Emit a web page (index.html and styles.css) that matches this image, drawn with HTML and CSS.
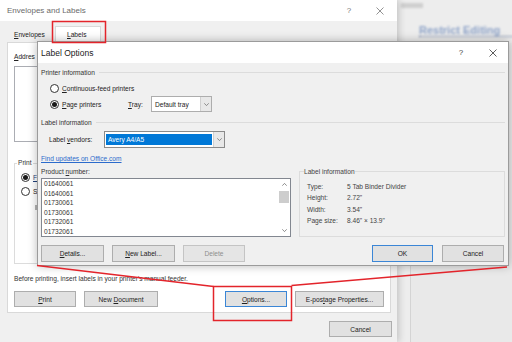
FILE: index.html
```html
<!DOCTYPE html>
<html>
<head>
<meta charset="utf-8">
<title>Envelopes and Labels</title>
<link rel="stylesheet" href="styles.css">
</head>
<body>
<div class="desk">
  <div class="outer">
    <div class="titlebar">
      <span class="title">Envelopes and Labels</span>
      <span class="tb-help">?</span>
      <span class="tb-close"><svg width="8" height="8" viewBox="0 0 8 8"><path d="M0.5 0.5L7.5 7.5M7.5 0.5L0.5 7.5" stroke="#777" stroke-width="0.8" fill="none"/></svg></span>
    </div>
    <div class="outer-body">
      <div class="tabs">
        <div class="tab"><u>E</u>nvelopes</div>
        <div class="tab active"><u>L</u>abels</div>
      </div>
      <div class="tabpage">
        <div class="addr-label"><u>A</u>ddres</div>
        <div class="addr-box"></div>
        <fieldset class="print-group">
          <legend>Print</legend>
          <div class="prow"><span class="radio on"></span><span class="opt-blue"><u>F</u></span></div>
          <div class="prow"><span class="radio"></span><span>S</span></div>
          <div class="prow dimrow"><span class="dim-mark"></span></div>
        </fieldset>
        <div class="note">Before printing, insert labels in your printer's manual feeder.</div>
        <div class="btnrow">
          <button class="btn w-print"><span><u>P</u>rint</span></button>
          <button class="btn w-newdoc"><span>New <u>D</u>ocument</span></button>
          <button class="btn default w-options"><span><u>O</u>ptions...</span></button>
          <button class="btn w-epost"><span>E-pos<u>t</u>age Properties...</span></button>
        </div>
      </div>
      <div class="outer-foot"><button class="btn w-cancel"><span>Cancel</span></button></div>
    </div>
  </div>

  <div class="bgapp">
    <div class="blob"></div>
    <div class="restrict">Restrict Editing</div>
    <div class="pane"></div>
  </div>

  <div class="lo">
    <div class="titlebar">
      <span class="title">Label Options</span>
      <span class="tb-help">?</span>
      <span class="tb-close"><svg width="8" height="8" viewBox="0 0 8 8"><path d="M0.5 0.5L7.5 7.5M7.5 0.5L0.5 7.5" stroke="#333" stroke-width="0.8" fill="none"/></svg></span>
    </div>
    <div class="lo-body">
      <div class="sec first">Printer information</div>
      <div class="r1"><span class="radio"></span><span><u>C</u>ontinuous-feed printers</span></div>
      <div class="r2">
        <span class="radio on"></span>
        <span class="pp"><u>P</u>age printers</span>
        <span class="tray-l"><u>T</u>ray:</span>
        <div class="combo tray">
          <div class="val">Default tray</div>
          <div class="dd"><svg width="5" height="3" viewBox="0 0 5 3"><path d="M0.3 0.3L2.5 2.6L4.7 0.3" stroke="#666" stroke-width="0.7" fill="none"/></svg></div>
        </div>
      </div>
      <div class="sec second">Label information</div>
      <div class="vrow">
        <span class="vl">Label <u>v</u>endors:</span>
        <div class="combo vendor">
          <div class="val sel">Avery A4/A5</div>
          <div class="dd"><svg width="5" height="3" viewBox="0 0 5 3"><path d="M0.3 0.3L2.5 2.6L4.7 0.3" stroke="#666" stroke-width="0.7" fill="none"/></svg></div>
        </div>
      </div>
      <div class="link">Find updates on Office.com</div>
      <div class="lower">
        <div class="leftcol">
          <div class="pn-label">Product <u>n</u>umber:</div>
          <div class="list">
            <div class="items">
              <div>01640061</div>
              <div>01640061</div>
              <div>01730061</div>
              <div>01730061</div>
              <div>01732061</div>
              <div>01732061</div>
            </div>
            <div class="sb">
              <div class="sb-btn"><svg width="5" height="3" viewBox="0 0 5 3"><path d="M0.3 2.7L2.5 0.4L4.7 2.7" stroke="#606060" stroke-width="0.7" fill="none"/></svg></div>
              <div class="thumb"></div>
              <div class="sb-space"></div>
              <div class="sb-btn"><svg width="5" height="3" viewBox="0 0 5 3"><path d="M0.3 0.3L2.5 2.6L4.7 0.3" stroke="#606060" stroke-width="0.7" fill="none"/></svg></div>
            </div>
          </div>
        </div>
        <fieldset class="info">
          <legend>Label information</legend>
          <div class="info-grid">
            <span>Type:</span><span>5 Tab Binder Divider</span>
            <span>Height:</span><span>2.72"</span>
            <span>Width:</span><span>3.54"</span>
            <span>Page size:</span><span>8.46" × 13.9"</span>
          </div>
        </fieldset>
      </div>
      <div class="lo-btns">
        <button class="btn w-details"><span><u>D</u>etails...</span></button>
        <button class="btn w-newlabel"><span><u>N</u>ew Label...</span></button>
        <button class="btn w-delete" disabled><span>Delete</span></button>
        <button class="btn default w-ok"><span>OK</span></button>
        <button class="btn w-locancel"><span>Cancel</span></button>
      </div>
    </div>
  </div>

  <svg class="annot" width="512" height="342" viewBox="0 0 512 342">
    <g fill="none" stroke="#e3242b" stroke-width="1.5">
      <rect x="52.5" y="21.5" width="53" height="21"/>
      <rect x="213.5" y="286.5" width="78" height="34"/>
      <line x1="37" y1="265.5" x2="213.5" y2="286.5"/>
      <line x1="291.5" y1="285.5" x2="507" y2="267"/>
    </g>
  </svg>
</div>
</body>
</html>
```

FILE: styles.css
```css
* { box-sizing: border-box; margin: 0; padding: 0; }
html, body { width: 512px; height: 342px; overflow: hidden; }
body {
  font-family: "Liberation Sans", Arial, sans-serif;
  font-size: 6.6px;
  color: #222;
  background: #eeeeee;
}
u { text-decoration: underline; text-underline-offset: 1px; }

.desk { position: relative; width: 512px; height: 342px; display: flex; overflow: hidden; }

/* ---------- shared ---------- */
.titlebar { display: flex; align-items: center; background: #fff; height: 21px; flex: none; }
.title { flex: 1; font-size: 8px; color: #6a6a6a; white-space: nowrap; }
.tb-help { width: 10px; text-align: center; font-size: 8px; color: #777; }
.tb-close { width: 10px; height: 10px; display: flex; align-items: center; justify-content: center; }

.btn {
  display: flex; align-items: center; justify-content: center;
  height: 16px; flex: none; white-space: nowrap;
  font-family: inherit; font-size: inherit; color: #222;
  background: #e1e1e1; border: 1px solid #adadad;
}
.btn.default { border-color: #3b86d6; }
.btn[disabled] { color: #8e8e8e; border-color: #c4c4c4; background: #e5e5e5; }

.radio {
  width: 9px; height: 9px; border-radius: 50%;
  border: 1px solid #333; background: #fff; flex: none;
  display: flex; align-items: center; justify-content: center;
}
.radio.on::after { content: ""; width: 5px; height: 5px; border-radius: 50%; background: #1a1a1a; }

/* ---------- outer dialog ---------- */
.outer {
  position: relative; z-index: 1;
  width: 397px; height: 342px; flex: none;
  background: #f0f0f0;
  box-shadow: 2px 0 7px rgba(0,0,0,.18);
  display: flex; flex-direction: column;
}
.outer .titlebar { padding: 0 12px 0 7px; }
.outer .tb-close { margin-left: 21px; }
.outer-body { flex: 1; display: flex; flex-direction: column; padding-left: 7px; }

.tabs { display: flex; align-items: flex-end; height: 21px; flex: none; }
.tab { height: 14px; line-height: 14px; width: 48px; padding-left: 7px; color: #222; }
.tab.active {
  position: relative; z-index: 1;
  height: 17px; line-height: 16px; width: 46px; padding-left: 11px;
  background: #fff; border: 1px solid #d9d9d9; border-bottom: none;
  margin-bottom: -1px;
}

.tabpage {
  width: 384px; height: 271px; flex: none;
  background: #fff; border: 1px solid #d9d9d9;
  padding: 9px 0 0 6px;
}
.addr-label { line-height: 10px; white-space: nowrap; }
.addr-box { margin-top: 4px; height: 76px; width: 370px; border: 1px solid #abadb3; }

.print-group {
  margin-top: 16px; height: 106px; width: 370px; min-width: 0;
  border: 1px solid #dcdcdc; padding: 0 0 0 6px;
}
.print-group legend { margin-left: -4px; padding: 0 1px; line-height: 10px; color: #333; }
.prow { display: flex; align-items: center; height: 10px; margin-top: 4px; gap: 3px; white-space: nowrap; }
.opt-blue { color: #1f3f7a; }
.dimrow { padding-left: 14px; margin-top: 6px; }
.dim-mark { width: 2px; height: 5px; background: #b4b4b4; }

.note { margin-top: 10px; line-height: 10px; color: #333; }
.btnrow { display: flex; gap: 8px; margin-top: 7px; }
.w-print { width: 62px; }
.w-newdoc { width: 74px; }
.w-options { width: 62px; margin-left: 59px; }
.w-epost { width: 89px; }

.outer-foot { display: flex; justify-content: flex-end; padding: 8px 5px 0 0; }
.w-cancel { width: 63px; }

/* ---------- background app ---------- */
.bgapp { flex: 1; display: flex; flex-direction: column; background: #ededed; }
.blob { margin: 3px 0 0 4px; width: 22px; height: 5px; background: #cfcfcf; filter: blur(1px); }
.restrict {
  margin: 17px 0 0 22px; width: 100px;
  font-size: 11px; font-weight: bold; line-height: 11px; white-space: nowrap;
  color: #8ea3c8; filter: blur(1px);
  border-bottom: 1px dotted #4d6494;
}
.pane { flex: 1; margin: 6px 0 0 13px; border-left: 1px solid #d4d4d4; background: #e9e9e9; }

/* ---------- Label Options dialog ---------- */
.lo {
  position: absolute; left: 37px; top: 41px; z-index: 2;
  width: 472px; height: 225px;
  background: #f0f0f0; border: 1px solid #9b9b9b;
  box-shadow: 0 0 9px rgba(0,0,0,.28);
  display: flex; flex-direction: column;
}
.lo .titlebar { padding: 0 10px 0 3px; }
.lo .title { font-size: 8.5px; color: #222; }
.lo .tb-help { color: #444; }
.lo .tb-close { margin-left: 22px; }
.lo-body { padding: 0 3px 3px 3px; display: flex; flex-direction: column; }

.sec { display: flex; align-items: center; height: 11px; color: #333; white-space: nowrap; }
.sec::after { content: ""; flex: 1; height: 1px; background: #dcdcdc; margin-left: 4px; }
.sec.first { margin-top: 4px; }
.sec.second { margin-top: 5px; }

.r1 { margin-top: 4px; height: 12px; padding-left: 9px; display: flex; align-items: center; gap: 3px; }
.r2 { margin-top: 2px; height: 16px; padding-left: 9px; display: flex; align-items: center; }
.r2 .radio { margin-right: 3px; }
.pp { width: 66px; }
.tray-l { width: 23px; }

.combo { display: flex; border: 1px solid #adadad; background: #fff; flex: none; }
.combo .val { flex: 1; display: flex; align-items: center; padding-left: 3px; white-space: nowrap; }
.combo .dd { width: 11px; flex: none; border-left: 1px solid #d0d0d0; background: #e8e8e8; display: flex; align-items: center; justify-content: center; }
.combo.tray { width: 61px; height: 16px; }

.vrow { margin-top: 3px; height: 17px; padding-left: 8px; display: flex; align-items: center; }
.vl { width: 55px; }
.combo.vendor { width: 121px; height: 17px; border-color: #8a8a8a; }
.combo.vendor .val.sel { margin: 2px 1px; padding-left: 2px; background: #0078d7; color: #fff; }
.combo.vendor .dd { width: 11px; }

.link { margin-top: 5px; height: 11px; line-height: 11px; color: #2b6bcc; text-decoration: underline; }

.lower { margin-top: 2px; height: 71px; display: grid; grid-template-columns: 250px 206px; column-gap: 8px; }
.pn-label { height: 12px; line-height: 12px; color: #333; }
.list { height: 59px; border: 1px solid #828790; background: #fff; display: flex; }
.items { flex: 1; padding-left: 2px; line-height: 9.5px; color: #333; }
.sb { width: 11px; flex: none; display: flex; flex-direction: column; }
.sb-btn { height: 11px; display: flex; align-items: center; justify-content: center; }
.thumb { height: 12px; margin: 1px 1px 0 0; background: #cdcdcd; }
.sb-space { flex: 1; }

.info { height: 71px; min-width: 0; border: 1px solid #dcdcdc; padding: 0 0 0 7px; }
.info legend { margin-left: -3px; padding: 0; line-height: 11px; color: #444; }
.info-grid { display: grid; grid-template-columns: 40px auto; line-height: 11.5px; margin-top: 3.5px; color: #444; }

.lo-btns { margin-top: 8px; display: flex; gap: 8px; }
.lo-btns .btn { height: 17px; }
.w-details { width: 63px; }
.w-newlabel { width: 63px; }
.w-delete { width: 62px; }
.w-ok { width: 61px; margin-left: auto; }
.w-locancel { width: 62px; margin-left: 1px; margin-right: 1px; }

/* ---------- annotation overlay ---------- */
.annot { position: absolute; left: 0; top: 0; z-index: 3; pointer-events: none; }
```
